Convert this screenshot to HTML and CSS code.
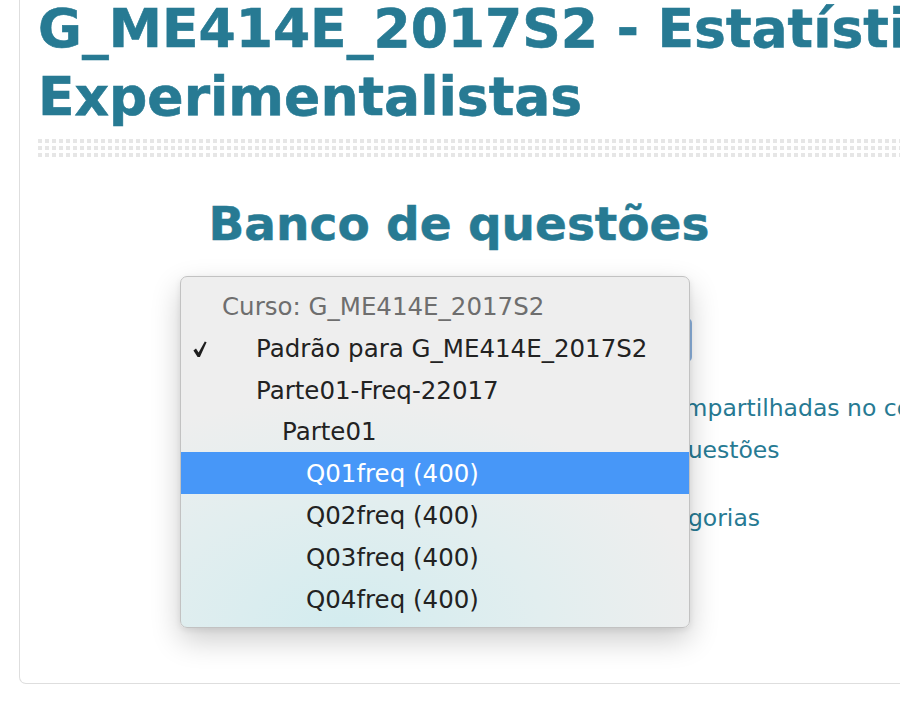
FILE: index.html
```html
<!DOCTYPE html>
<html lang="pt-BR">
<head>
<meta charset="utf-8">
<title>Banco de questões</title>
<link rel="stylesheet" href="styles.css">
</head>
<body>
<div class="card">
  <h1 class="course-title">G_ME414E_2017S2 - Estatística para Experimentalistas</h1>
  <div class="dots"></div>
  <div class="region">
    <h2 class="page-title">Banco de questões</h2>
    <div class="form">
      <div class="select-row">
        <div class="select">Padrão para G_ME414E_2017S2</div>
      </div>
      <p class="info first">A categoria padrão para as questões compartilhadas no contexto</p>
      <p class="info second">Não há questões nesta categoria de questões</p>
      <p class="info opt">Mostrar também questões das subcategorias</p>

      <div class="menu">
        <div class="item header">Curso: G_ME414E_2017S2</div>
        <div class="item lvl0 checked"><svg class="check" width="14" height="17" viewBox="0 0 14 17"><path d="M0.4 9.4 L3 7.6 L5.6 11.4 L11.8 0.4 L13.6 1.3 L6.9 15.9 L4.6 15.9 Z" fill="#1e1e1e"/></svg>Padrão para G_ME414E_2017S2</div>
        <div class="item lvl0">Parte01-Freq-22017</div>
        <div class="item lvl1">Parte01</div>
        <div class="item lvl2 active">Q01freq (400)</div>
        <div class="item lvl2">Q02freq (400)</div>
        <div class="item lvl2">Q03freq (400)</div>
        <div class="item lvl2">Q04freq (400)</div>
      </div>
    </div>
  </div>
</div>
</body>
</html>
```
FILE: styles.css
```css
html, body {
  margin: 0;
  padding: 0;
  overflow: hidden;
  background: #ffffff;
}
body {
  width: 900px;
  height: 702px;
  font-family: "DejaVu Sans", Verdana, sans-serif;
}
.card {
  display: flow-root;
  margin-left: 19px;
  width: 1300px;
  height: 684px;
  box-sizing: border-box;
  border: 1px solid #dedede;
  border-top: none;
  border-radius: 0 0 0 7px;
  padding-left: 18px;
}
.course-title {
  margin: -5px 0 0 0;
  width: 1250px;
  font-size: 53.5px;
  line-height: 68px;
  font-weight: bold;
  color: #277a93;
  -webkit-text-stroke: 0.6px #277a93;
}
.dots {
  margin-top: 8px;
  height: 18px;
  background-image:
    linear-gradient(to bottom, transparent 4px, #ffffff 4px),
    linear-gradient(to right, #e6e6e6 4px, transparent 4px);
  background-size: 7px 7px;
}
.region {
  width: 842px;
}
.page-title {
  margin: 37px 0 0 0;
  text-align: center;
  font-size: 47px;
  line-height: 60px;
  font-weight: bold;
  color: #277a93;
  -webkit-text-stroke: 0.5px #277a93;
}
.form {
  display: flow-root;
  position: relative;
  font-size: 23.5px;
  color: #277a93;
}
.select-row {
  display: flex;
  margin-top: 64px;
  height: 44px;
}
.select {
  margin-left: 150px;
  width: 504px;
  height: 44px;
  box-sizing: border-box;
  border: 2px solid #8db3df;
  border-radius: 5px;
  padding-left: 10px;
  line-height: 40px;
  color: #333;
  white-space: nowrap;
  overflow: hidden;
}
.info {
  margin: 0;
  white-space: nowrap;
  line-height: 42px;
}
.info.first {
  margin-top: 25px;
  padding-left: 178px;
}
.info.second {
  padding-left: 202px;
}
.info.opt {
  margin-top: 26px;
  padding-left: 190px;
}
.menu {
  position: absolute;
  left: 142px;
  top: 22px;
  width: 510px;
  height: 352px;
  box-sizing: border-box;
  padding: 8px 0;
  border: 1px solid #c2c2c2;
  border-radius: 7px;
  background: radial-gradient(ellipse 440px 280px at 32% 100%, #d3ecef 0%, #e2eeef 45%, #eeeeee 82%);
  box-shadow: 0 12px 30px rgba(0, 0, 0, 0.2), 0 2px 6px rgba(0, 0, 0, 0.08);
  font-size: 24.5px;
  color: #222;
}
.item {
  position: relative;
  height: 41.8px;
  line-height: 44px;
  white-space: nowrap;
}
.item.header {
  padding-left: 41px;
  color: #6e6e6e;
}
.item.lvl0 { padding-left: 75px; }
.item.lvl1 { padding-left: 101px; }
.item.lvl2 { padding-left: 125px; }
.item.active {
  background: #4797f8;
  color: #ffffff;
}
.check {
  position: absolute;
  left: 12px;
  top: 14px;
}
```
